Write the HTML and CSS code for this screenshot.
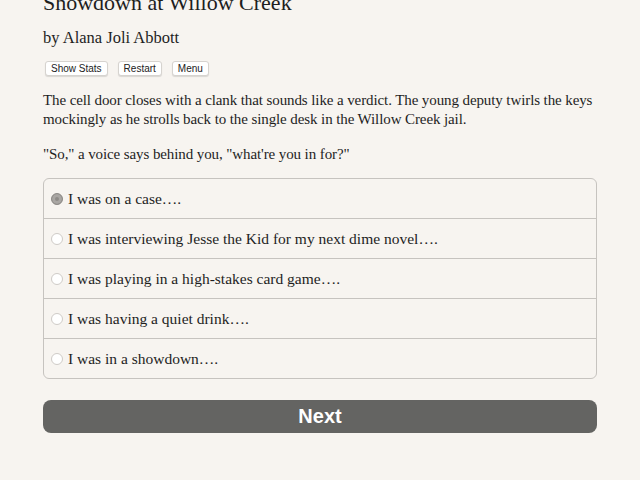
FILE: index.html
```html
<!DOCTYPE html>
<html lang="en">
<head>
  <meta charset="UTF-8" />
  <title>Showdown at Willow Creek</title>
  <link rel="stylesheet" href="styles.css">
</head>
<body>
  <div class="container">
    <h1 class="title">Showdown at Willow Creek</h1>
    <h2 class="author">by Alana Joli Abbott</h2>
    <div class="btn-group">
      <button class="small-btn">Show Stats</button>
      <button class="small-btn">Restart</button>
      <button class="small-btn">Menu</button>
    </div>

    <p>The cell door closes with a clank that sounds like a verdict. The young deputy twirls the keys mockingly as he strolls back to the single desk in the Willow Creek jail.</p>
    <p>"So," a voice says behind you, "what're you in for?"</p>

    <!-- Choices -->
    <div class="choices">
      <label class="choice"><input type="radio" name="choice" checked> I was on a case….</label>
      <label class="choice"><input type="radio" name="choice"> I was interviewing Jesse the Kid for my next dime novel….</label>
      <label class="choice"><input type="radio" name="choice"> I was playing in a high-stakes card game….</label>
      <label class="choice"><input type="radio" name="choice"> I was having a quiet drink….</label>
      <label class="choice"><input type="radio" name="choice"> I was in a showdown….</label>
    </div>

    <button class="next-btn">Next</button>
  </div>
</body>
</html>
```

FILE: styles.css
```css
body {
  font-family: "Liberation Serif", serif;
  background-color: #f7f4f0;
  color: #1e1e1e;
  margin: 0;
}
.container {
  max-width: 554px;
  margin: 0 auto;
}
.title {
  font-size: 22px;
  font-weight: normal;
  margin: -11px 0 0;
  line-height: 28px;
}
.author {
  font-size: 16.5px;
  font-weight: normal;
  margin: 11px 0 0;
  line-height: 20px;
}
.btn-group {
  display: flex;
  gap: 10px;
  margin: 13px 0 0 2px;
}
.small-btn {
  font-family: "Liberation Sans", Arial, sans-serif;
  font-size: 10px;
  color: #222;
  background-color: #fff;
  border: 1px solid #d6d3cf;
  border-radius: 3px;
  box-shadow: 0 1px 1px rgba(0,0,0,0.12);
  padding: 1px 5px;
  height: 15px;
  line-height: 11px;
}
p {
  font-size: 15px;
  letter-spacing: -0.1px;
  line-height: 19px;
  margin: 15px 0 0;
}
p + p {
  margin-top: 16px;
}
.choices {
  margin-top: 14px;
  border: 1px solid #c6c3bf;
  border-radius: 6px;
}
.choice {
  display: flex;
  align-items: center;
  height: 39px;
  padding-left: 7px;
  font-size: 15.5px;
  border-top: 1px solid #c6c3bf;
}
.choice:first-child {
  border-top: none;
}
.choice input {
  appearance: none;
  width: 12px;
  height: 12px;
  margin: 0 5px 0 0;
  border: 1px solid #cfcbc7;
  border-radius: 50%;
  background-color: #fff;
}
.choice input:checked {
  background-color: #8e8b88;
  border-color: #8e8b88;
  box-shadow: inset 0 0 0 3px #a9a6a3;
}
.next-btn {
  display: block;
  width: 100%;
  height: 33px;
  margin-top: 21px;
  background-color: #646462;
  color: #fff;
  border: none;
  border-radius: 8px;
  font-family: "Liberation Sans", Arial, sans-serif;
  font-weight: bold;
  font-size: 20px;
}
```
